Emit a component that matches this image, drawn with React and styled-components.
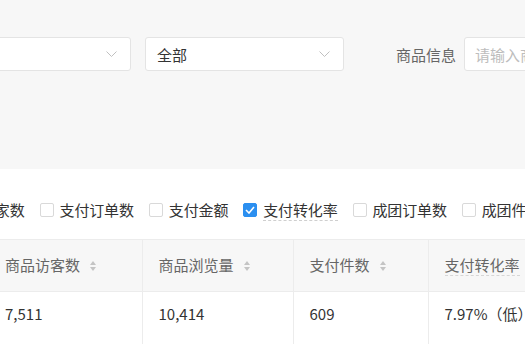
import styled, { createGlobalStyle } from 'styled-components'

const GlobalStyle = createGlobalStyle`
  html, body {
    margin: 0;
    padding: 0;
    background: #fff;
    overflow: hidden;
  }
  body {
    font-family: "Noto Sans CJK SC", "Noto Sans", sans-serif;
    font-size: 15px;
    color: #333;
  }
`

const metrics = [
  { label: '买家数', checked: false },
  { label: '支付订单数', checked: false },
  { label: '支付金额', checked: false },
  { label: '支付转化率', checked: true, hint: true },
  { label: '成团订单数', checked: false },
  { label: '成团件数', checked: false },
]

const columns = [
  { title: '商品访客数', width: 153, sort: true },
  { title: '商品浏览量', width: 151, sort: true },
  { title: '支付件数', width: 135, sort: true },
  { title: '支付转化率', width: 160, hint: true },
]

const rows = [['7,511', '10,414', '609', '7.97%（低）']]

function Chevron() {
  return (
    <svg width="11" height="6" viewBox="0 0 11 6" fill="none">
      <path d="M0.5 0.5 L5.5 5.5 L10.5 0.5" stroke="#c0c0c0" strokeWidth="1" />
    </svg>
  )
}

function SortIcon() {
  return (
    <svg width="6" height="10" viewBox="0 0 6 10">
      <path d="M3 0 L6 4 H0 Z" fill="#c4c4c4" />
      <path d="M3 10 L6 6 H0 Z" fill="#c4c4c4" />
    </svg>
  )
}

function Tick() {
  return (
    <svg width="10" height="8" viewBox="0 0 10 8" fill="none">
      <path d="M1 4 L4 7 L9 1" stroke="#fff" strokeWidth="1.6" />
    </svg>
  )
}

export default function App() {
  return (
    <Page>
      <GlobalStyle />
      <Filters>
        <FilterRow>
          <Select $width={200} $shift={-69}>
            <span />
            <Chevron />
          </Select>
          <Select $width={199}>
            <span>全部</span>
            <Chevron />
          </Select>
          <Label>商品信息</Label>
          <Input placeholder="请输入商品名称" />
        </FilterRow>
      </Filters>

      <Content>
        <MetricRow>
          {metrics.map((m) => (
            <Metric key={m.label}>
              <Box $checked={m.checked}>{m.checked && <Tick />}</Box>
              <MetricText $hint={m.hint}>{m.label}</MetricText>
            </Metric>
          ))}
        </MetricRow>

        <Table>
          <colgroup>
            {columns.map((c) => (
              <col key={c.title} style={{ width: c.width }} />
            ))}
          </colgroup>
          <thead>
            <tr>
              {columns.map((c) => (
                <Th key={c.title}>
                  <HeadCell>
                    <HeadText $hint={c.hint}>{c.title}</HeadText>
                    {c.sort && <SortIcon />}
                  </HeadCell>
                </Th>
              ))}
            </tr>
          </thead>
          <tbody>
            {rows.map((r, i) => (
              <tr key={i}>
                {r.map((v, j) => (
                  <Td key={j}>{v}</Td>
                ))}
              </tr>
            ))}
          </tbody>
        </Table>
      </Content>
    </Page>
  )
}

const Page = styled.div`
  width: 525px;
  height: 361px;
  overflow: hidden;
  background: #fff;
`

const Filters = styled.div`
  background: #f7f7f7;
  height: 169px;
  padding-top: 37px;
  box-sizing: border-box;
`

const FilterRow = styled.div`
  display: flex;
  align-items: center;
  white-space: nowrap;
`

const Select = styled.div`
  flex: none;
  width: ${(p) => p.$width}px;
  height: 34px;
  margin-left: ${(p) => p.$shift ?? 14}px;
  box-sizing: border-box;
  border: 1px solid #e4e4e4;
  border-radius: 3px;
  background: #fff;
  display: flex;
  align-items: center;
  justify-content: space-between;
  padding: 0 13px 0 11px;
  color: #333;
`

const Label = styled.span`
  margin-left: 52px;
  color: #666;
`

const Input = styled.input`
  flex: none;
  width: 160px;
  height: 34px;
  margin-left: 8px;
  box-sizing: border-box;
  border: 1px solid #e4e4e4;
  border-radius: 3px;
  background: #fff;
  padding: 0 10px;
  font: inherit;
  outline: none;
  &::placeholder {
    color: #bdbdbd;
  }
`

const Content = styled.div`
  padding-top: 29px;
`

const MetricRow = styled.div`
  display: flex;
  align-items: center;
  gap: 15px;
  margin-left: -40px;
  height: 24px;
  white-space: nowrap;
  letter-spacing: -0.15px;
`

const Metric = styled.label`
  display: flex;
  align-items: center;
  gap: 6px;
  flex: none;
`

const Box = styled.span`
  width: 14px;
  height: 14px;
  box-sizing: border-box;
  border-radius: 2px;
  border: 1px solid ${(p) => (p.$checked ? '#2b8ff0' : '#d9d9d9')};
  background: ${(p) => (p.$checked ? '#2b8ff0' : '#fff')};
  display: flex;
  align-items: center;
  justify-content: center;
`

const MetricText = styled.span`
  line-height: 20px;
  border-bottom: 1px dashed ${(p) => (p.$hint ? '#cfcfcf' : 'transparent')};
  padding-top: 1px;
`

const Table = styled.table`
  margin-top: 17px;
  margin-left: -11px;
  border-collapse: collapse;
  table-layout: fixed;
  width: 599px;
`

const Th = styled.th`
  height: 52px;
  padding: 0 16px;
  background: #f7f7f7;
  border-top: 1px solid #ececec;
  border-bottom: 1px solid #ececec;
  border-right: 1px solid #ececec;
  text-align: left;
  font-weight: normal;
  color: #666;
  box-sizing: border-box;
`

const HeadCell = styled.div`
  display: flex;
  align-items: center;
  gap: 10px;
  white-space: nowrap;
`

const HeadText = styled.span`
  line-height: 20px;
  border-bottom: 1px dashed ${(p) => (p.$hint ? '#d6d6d6' : 'transparent')};
`

const Td = styled.td`
  height: 52px;
  padding: 12px 16px 0;
  vertical-align: top;
  line-height: 20px;
  border-right: 1px solid #ececec;
  color: #333;
  white-space: nowrap;
  box-sizing: border-box;
`
